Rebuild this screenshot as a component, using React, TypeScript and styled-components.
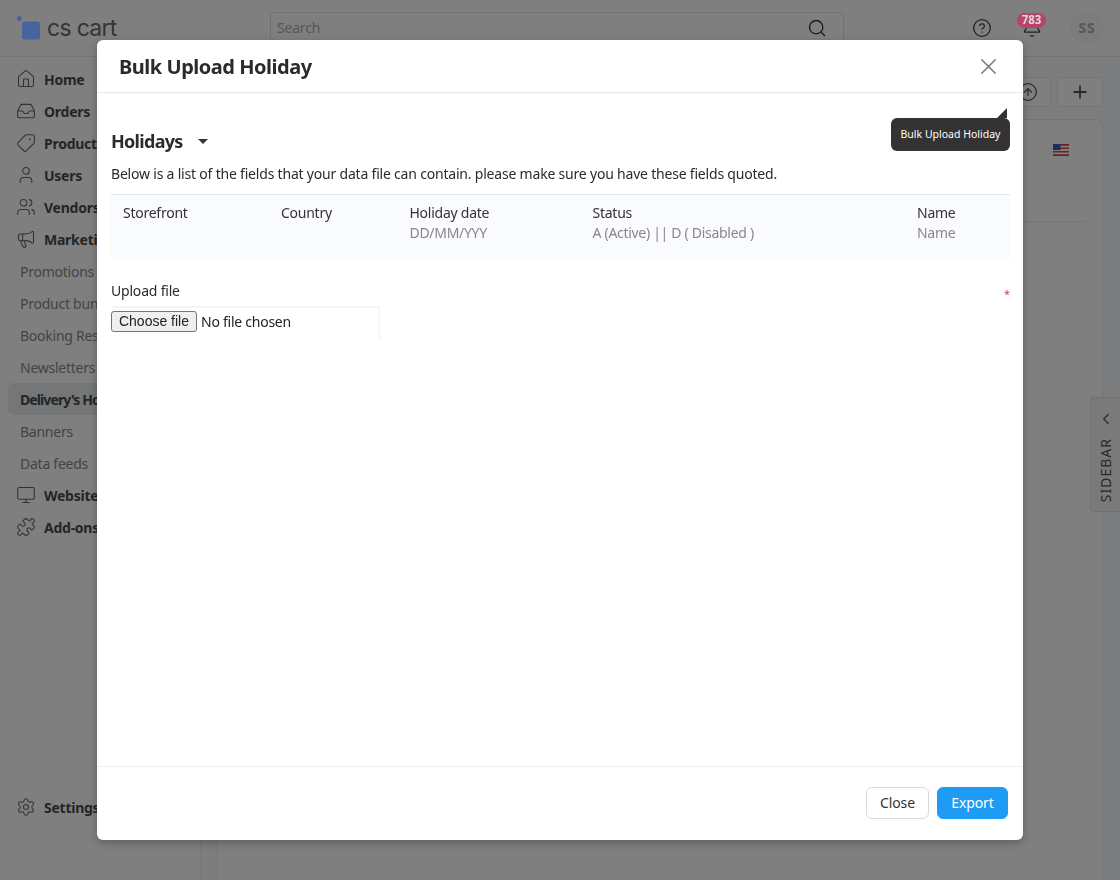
import React from 'react';
import styled, { createGlobalStyle } from 'styled-components';
import {
  Bell,
  ChevronLeft,
  CircleArrowUp,
  CircleHelp,
  House,
  Inbox,
  Megaphone,
  Monitor,
  Plus,
  Puzzle,
  Search,
  Settings,
  Tag,
  User,
  Users,
  X,
} from 'lucide-react';

const GlobalStyle = createGlobalStyle`
  html, body {
    margin: 0;
    height: 100%;
    overflow: hidden;
    background: #fff;
    font-family: "Noto Sans", "Open Sans", sans-serif;
    color: #212529;
  }
  * { box-sizing: border-box; }
`;

const Page = styled.div`
  width: 1120px;
  height: 880px;
  display: flex;
  flex-direction: column;
  overflow: hidden;
`;

const TopBar = styled.header`
  height: 57px;
  flex-shrink: 0;
  display: flex;
  align-items: center;
  padding: 0 16px;
  border-bottom: 1px solid #e6e6e6;
  background: #fff;
`;

const LogoBox = styled.div`
  width: 254px;
  display: flex;
  align-items: center;
  gap: 7px;
`;

// the logo and the badge keep their colour through the dimmed backdrop
const LogoMark = styled.svg`
  position: relative;
  z-index: 1;
`;

const LogoText = styled.span`
  font-family: "Inter", sans-serif;
  font-size: 23px;
  letter-spacing: -0.7px;
  color: #6a6a6a;
`;

const SearchBox = styled.div`
  width: 574px;
  height: 31px;
  margin-top: -1px;
  display: flex;
  align-items: center;
  justify-content: space-between;
  padding: 0 16px 0 6px;
  border: 1px solid #e3e3e3;
  border-radius: 4px;
  font-size: 14px;
  letter-spacing: -0.2px;
  color: #aaa;
`;

const TopIcons = styled.div`
  margin-left: auto;
  display: flex;
  align-items: center;
  gap: 27px;
`;

const BellWrap = styled.div`
  position: relative;
  width: 24px;
  height: 22px;
  margin-left: 1px;
  display: flex;
  justify-content: center;
  align-items: center;
`;

const Badge = styled.span`
  position: absolute;
  z-index: 1;
  top: -4px;
  left: -3px;
  width: 29px;
  height: 15px;
  border-radius: 8px;
  background: #b8446a;
  color: #e3d5da;
  font-size: 11.5px;
  font-weight: 700;
  line-height: 14px;
  text-align: center;
`;

const Avatar = styled.div`
  width: 34px;
  height: 34px;
  margin-left: -1px;
  border-radius: 50%;
  background: #f8f8f8;
  color: #b0b0b0;
  font-size: 14px;
  font-weight: 700;
  letter-spacing: 0.8px;
  line-height: 34px;
  text-align: center;
`;

const Body = styled.div`
  flex: 1;
  display: flex;
  min-height: 0;
`;

const SideNav = styled.nav`
  width: 200px;
  flex-shrink: 0;
  padding: 6px 8px 0;
  display: flex;
  flex-direction: column;
  background: #fff;
`;

const NavRow = styled.div<{ $active?: boolean; $sub?: boolean }>`
  height: 32px;
  flex-shrink: 0;
  display: flex;
  align-items: center;
  gap: 8px;
  padding-left: ${(p) => (p.$sub ? '12px' : '8px')};
  border-radius: 6px;
  background: ${(p) => (p.$active ? '#e9ecef' : 'transparent')};
  font-size: 14px;
  letter-spacing: ${(p) => (p.$active ? '-0.9px' : '-0.25px')};
  white-space: nowrap;
  font-weight: ${(p) => (p.$sub && !p.$active ? 400 : 700)};
  color: ${(p) => (p.$sub && !p.$active ? '#888' : '#4b4b4b')};
  svg { color: #666; flex-shrink: 0; }
`;

const FlippedTag = styled(Tag)`
  transform: scaleX(-1);
`;

const NavSpacer = styled.div`
  flex: 1;
`;

const SettingsRow = styled(NavRow)`
  margin-bottom: 57px;
`;

const Main = styled.main`
  position: relative;
  flex: 1;
  padding: 20px 17px 0 16px;
  background: #f8fafc;
  border-left: 1px solid #f0f0f0;
`;

const ActionBar = styled.div`
  display: flex;
  justify-content: flex-end;
  gap: 6px;
  margin-bottom: 12px;
`;

const ActionButton = styled.div`
  width: 46px;
  height: 30px;
  display: flex;
  align-items: center;
  justify-content: center;
  border: 1px solid #e3e6ea;
  border-radius: 4px;
  background: #fff;
  color: #555;
`;

const Card = styled.section`
  height: 800px;
  padding: 24px 15px;
  border: 1px solid #e6e8eb;
  border-radius: 6px;
  background: #fff;
`;

const CardHead = styled.div`
  display: flex;
  justify-content: flex-end;
  height: 78px;
  border-bottom: 1px solid #ececec;
  padding-right: 18px;
`;

const SidebarTab = styled.div`
  position: absolute;
  top: 340px;
  right: 0;
  width: 30px;
  height: 115px;
  display: flex;
  flex-direction: column;
  align-items: center;
  gap: 10px;
  padding-top: 12px;
  background: #f4f4f4;
  border: 1px solid #e3e3e3;
  border-right: 0;
  border-radius: 4px 0 0 4px;
  color: #555;
`;

const SidebarLabel = styled.span`
  writing-mode: vertical-rl;
  transform: rotate(180deg);
  font-size: 14px;
  letter-spacing: 1px;
`;

const Backdrop = styled.div`
  position: fixed;
  inset: 0;
  background: rgba(0, 0, 0, 0.5);
`;

const Modal = styled.div`
  position: fixed;
  z-index: 2;
  top: 40px;
  left: 97px;
  width: 926px;
  height: 800px;
  display: flex;
  flex-direction: column;
  background: #fff;
  border-radius: 6px;
  box-shadow: 0 3px 10px rgba(0, 0, 0, 0.25);
`;

const ModalHead = styled.div`
  height: 53px;
  flex-shrink: 0;
  display: flex;
  align-items: center;
  justify-content: space-between;
  padding: 1px 21px 0 22px;
  border-bottom: 1px solid #e3e6ea;
`;

const ModalTitle = styled.h2`
  margin: 0;
  font-size: 20px;
  font-weight: 700;
  letter-spacing: -0.47px;
  color: #2b2b2b;
`;

const CloseIcon = styled(X)`
  color: #777;
`;

const ModalBody = styled.div`
  position: relative;
  flex: 1;
  padding: 35px 13px 0 14px;
`;

const Tooltip = styled.div`
  position: absolute;
  top: 25px;
  right: 13px;
  width: 119px;
  height: 33px;
  padding-bottom: 2px;
  display: flex;
  align-items: center;
  justify-content: center;
  border-radius: 6px;
  background: #333;
  color: #fff;
  font-size: 10.5px;

  &::after {
    content: '';
    position: absolute;
    top: -10px;
    right: 3px;
    border-left: 10px solid transparent;
    border-bottom: 10px solid #333;
  }
`;

const SectionHead = styled.div`
  display: flex;
  align-items: center;
  gap: 15px;
  height: 26px;
`;

const SectionTitle = styled.h3`
  margin: 0;
  font-size: 18px;
  font-weight: 700;
  letter-spacing: -0.7px;
  color: #2b2b2b;
`;

const Caret = styled.span`
  margin-top: 1px;
  border-left: 5.5px solid transparent;
  border-right: 5.5px solid transparent;
  border-top: 5.5px solid #333;
`;

const Hint = styled.p`
  margin: 10px 0 10px;
  font-size: 14px;
  line-height: 20px;
  letter-spacing: -0.2px;
  color: #2b2b2b;
`;

const FieldsGrid = styled.div`
  height: 66px;
  display: grid;
  grid-template-columns: 158px 128.5px 183px 324.5px 1fr;
  padding: 8px 12px 0;
  border-top: 1px solid #e3e6ea;
  background: #f9fbfe;
`;

const FieldName = styled.div`
  font-size: 14px;
  line-height: 20px;
  letter-spacing: -0.25px;
  color: #333;
`;

const FieldHint = styled.div`
  font-size: 14px;
  line-height: 20px;
  letter-spacing: -0.3px;
  color: #888;
`;

const UploadRow = styled.div`
  display: flex;
  justify-content: space-between;
  margin-top: 21px;
`;

const UploadLabel = styled.label`
  font-size: 14px;
  line-height: 20px;
  letter-spacing: -0.2px;
  color: #2b2b2b;
`;

const Required = styled.span`
  margin-top: 6px;
  font-size: 11px;
  line-height: 14px;
  color: #dc3545;
`;

const FileBox = styled.div`
  width: 269px;
  height: 33px;
  margin-top: 5px;
  padding-bottom: 4px;
  display: flex;
  align-items: center;
  gap: 4px;
  border-top: 2px solid #f6f6f6;
  border-right: 2px solid #f6f6f6;
`;

const FileButton = styled.button`
  width: 86px;
  height: 21px;
  padding: 0;
  border: 1px solid #767676;
  border-radius: 3px;
  background: #efefef;
  font-family: "Liberation Sans", Arial, sans-serif;
  font-size: 14px;
  line-height: 19px;
  color: #222;
`;

const FileName = styled.span`
  font-size: 14px;
  letter-spacing: -0.25px;
  color: #222;
`;

const ModalFoot = styled.div`
  height: 74px;
  flex-shrink: 0;
  display: flex;
  justify-content: flex-end;
  align-items: center;
  gap: 8px;
  padding: 0 15px 2px 0;
  border-top: 1px solid #eceef1;
`;

const FootButton = styled.button<{ $primary?: boolean }>`
  width: ${(p) => (p.$primary ? '71px' : '63px')};
  height: 32px;
  padding: 0;
  border: 1px solid ${(p) => (p.$primary ? '#1e9bf5' : '#d5dbe5')};
  border-radius: 6px;
  background: ${(p) => (p.$primary ? '#1e9bf5' : '#fff')};
  color: ${(p) => (p.$primary ? '#fff' : '#333')};
  font-family: inherit;
  font-size: 14px;
  letter-spacing: -0.1px;
`;

const navItems = [
  { label: 'Home', icon: House },
  { label: 'Orders', icon: Inbox },
  { label: 'Products', icon: FlippedTag },
  { label: 'Users', icon: User },
  { label: 'Vendors', icon: Users },
  { label: 'Marketing', icon: Megaphone },
  { label: 'Promotions', sub: true },
  { label: 'Product bun', sub: true },
  { label: 'Booking Rese', sub: true },
  { label: 'Newsletters', sub: true },
  { label: "Delivery's Ho", sub: true, active: true },
  { label: 'Banners', sub: true },
  { label: 'Data feeds', sub: true },
  { label: 'Website', icon: Monitor },
  { label: 'Add-ons', icon: Puzzle },
];

const fields = [
  { name: 'Storefront', hint: '' },
  { name: 'Country', hint: '' },
  { name: 'Holiday date', hint: 'DD/MM/YYY' },
  { name: 'Status', hint: 'A (Active) || D ( Disabled )' },
  { name: 'Name', hint: 'Name' },
];

const CsCartMark = () => (
  <LogoMark width="24" height="24" viewBox="0 0 24 24">
    <circle cx="3.3" cy="2.5" r="2.5" fill="#47659c" />
    <rect x="6" y="5.5" width="18" height="18" rx="2.5" fill="#47659c" />
  </LogoMark>
);

const UsFlag = () => (
  <svg width="16" height="12" viewBox="0 0 16 12">
    <rect width="16" height="12" fill="#fff" />
    <path d="M0 0h16v1.7H0zM0 3.4h16v1.7H0zM0 6.9h16v1.7H0zM0 10.3h16V12H0z" fill="#d8434e" />
    <rect width="7.5" height="6" fill="#3c5aa8" />
  </svg>
);

export default function App() {
  return (
    <Page>
      <GlobalStyle />
      <TopBar>
        <LogoBox>
          <CsCartMark />
          <LogoText>cs cart</LogoText>
        </LogoBox>
        <SearchBox>
          Search
          <Search size={20} color="#333" strokeWidth={1.6} />
        </SearchBox>
        <TopIcons>
          <CircleHelp size={20} color="#444" strokeWidth={1.6} />
          <BellWrap>
            <Bell size={20} color="#444" strokeWidth={1.6} />
            <Badge>783</Badge>
          </BellWrap>
          <Avatar>SS</Avatar>
        </TopIcons>
      </TopBar>
      <Body>
        <SideNav>
          {navItems.map(({ label, icon: Icon, sub, active }) => (
            <NavRow key={label} $sub={sub} $active={active}>
              {Icon && <Icon size={20} strokeWidth={1.3} />}
              {label}
            </NavRow>
          ))}
          <NavSpacer />
          <SettingsRow>
            <Settings size={20} strokeWidth={1.3} />
            Settings
          </SettingsRow>
        </SideNav>
        <Main>
          <ActionBar>
            <ActionButton>
              <CircleArrowUp size={20} strokeWidth={1.5} />
            </ActionButton>
            <ActionButton>
              <Plus size={20} strokeWidth={2.2} />
            </ActionButton>
          </ActionBar>
          <Card>
            <CardHead>
              <UsFlag />
            </CardHead>
          </Card>
          <SidebarTab>
            <ChevronLeft size={18} strokeWidth={1.6} />
            <SidebarLabel>SIDEBAR</SidebarLabel>
          </SidebarTab>
        </Main>
      </Body>

      <Backdrop />
      <Modal>
        <ModalHead>
          <ModalTitle>Bulk Upload Holiday</ModalTitle>
          <CloseIcon size={27} strokeWidth={1.3} />
        </ModalHead>
        <ModalBody>
          <Tooltip>Bulk Upload Holiday</Tooltip>
          <SectionHead>
            <SectionTitle>Holidays</SectionTitle>
            <Caret />
          </SectionHead>
          <Hint>
            Below is a list of the fields that your data file can contain. please make sure you have
            these fields quoted.
          </Hint>
          <FieldsGrid>
            {fields.map((f) => (
              <div key={f.name}>
                <FieldName>{f.name}</FieldName>
                <FieldHint>{f.hint}</FieldHint>
              </div>
            ))}
          </FieldsGrid>
          <UploadRow>
            <UploadLabel>Upload file</UploadLabel>
            <Required>*</Required>
          </UploadRow>
          <FileBox>
            <FileButton>Choose file</FileButton>
            <FileName>No file chosen</FileName>
          </FileBox>
        </ModalBody>
        <ModalFoot>
          <FootButton>Close</FootButton>
          <FootButton $primary>Export</FootButton>
        </ModalFoot>
      </Modal>
    </Page>
  );
}
